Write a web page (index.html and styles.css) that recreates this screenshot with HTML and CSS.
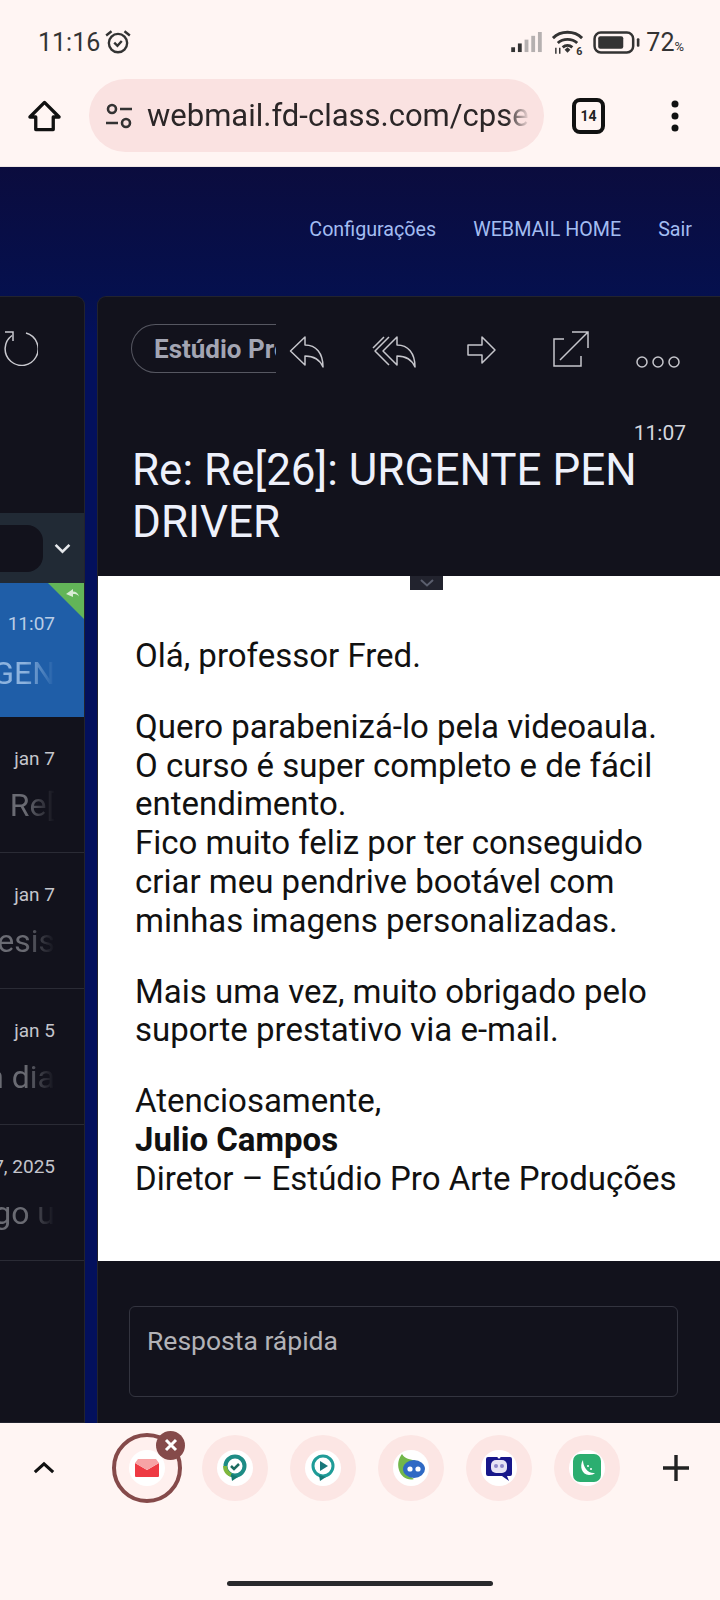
FILE: index.html
```html
<!DOCTYPE html>
<html lang="pt-BR">
<head>
  <meta charset="UTF-8" />
  <title>Webmail</title>
  <meta name="viewport" content="width=device-width, initial-scale=1" />
  <link rel="stylesheet" href="styles.css">
</head>
<body>
  <div class="screen">
    <header class="browser">
      <div class="status">
        <div class="status-left">
          <span class="clock">11:16</span>
          <svg class="alarm" viewBox="0 0 26 26" fill="none" stroke="#333" stroke-width="2.2"><circle cx="13" cy="14" r="8.5"/><path d="M2 7l5-4M24 7l-5-4M9.5 13.5l3 3 4-4.500"/></svg>
        </div>
        <div class="status-right">
          <svg class="signal" viewBox="0 0 32 22"><rect x="0" y="16" width="4" height="5" fill="#333"/><rect x="7" y="12" width="4" height="9" fill="#333"/><rect x="14" y="8" width="4" height="13" fill="#b5b0b0"/><rect x="21" y="4" width="4" height="17" fill="#b5b0b0"/><rect x="28" y="0" width="4" height="21" fill="#b5b0b0"/></svg>
          <svg class="wifi" viewBox="0 0 34 26" fill="none" stroke="#333" stroke-width="3"><path d="M2 9c8-8 22-8 30 0M7 14c5.500-5 14.500-5 20 0M12 18.500c3-2.500 7-2.500 10 0"/><path d="M14 21l3-2.500 3 2.500-3 3z" fill="#333" stroke="none"/><path d="M5 19v6M9 19v6" stroke-width="1.500"/><text x="26" y="26" class="wifi-six">6</text></svg>
          <svg class="battery" viewBox="0 0 46 22" fill="none"><rect x="1.500" y="1.500" width="37" height="19" rx="6" stroke="#333" stroke-width="2.400"/><rect x="5" y="5" width="24" height="12" rx="2" fill="#333"/><rect x="42" y="7" width="2.500" height="8" rx="1" fill="#333"/></svg>
          <span class="level">72<small>%</small></span>
        </div>
      </div>
      <div class="toolbar">
        <svg class="home" viewBox="0 0 36 36" fill="none" stroke="#111" stroke-width="3.400" stroke-linejoin="round"><path d="M18 4L3 19h6v13h18V19h6z"/></svg>
        <div class="url">
          <svg class="tune" viewBox="0 0 28 26" fill="none" stroke="#333" stroke-width="2.600"><circle cx="7" cy="6" r="4"/><path d="M15 6h12M1 20h12"/><circle cx="21" cy="20" r="4"/></svg>
          <span class="url-text">webmail.fd-class.com/cpsess</span>
        </div>
        <span class="tabs">14</span>
        <svg class="more" viewBox="0 0 8 32" fill="#111"><circle cx="4" cy="4" r="3.500"/><circle cx="4" cy="16" r="3.500"/><circle cx="4" cy="28" r="3.500"/></svg>
      </div>
    </header>

    <div class="page">
      <nav class="topnav">
        <a href="#">Configurações</a>
        <a href="#">WEBMAIL HOME</a>
        <a href="#">Sair</a>
      </nav>
      <div class="panels">
        <aside class="list">
          <div class="list-head">
            <svg class="refresh" viewBox="0 0 36 36" fill="none" stroke="#c9c9cf" stroke-width="1.500"><path d="M10 5.500A16.500 16.500 0 1 0 24 3"/><path d="M3 2h8v9"/></svg>
          </div>
          <div class="filter">
            <span class="filter-box"></span>
            <svg class="chev" viewBox="0 0 16 10" fill="none" stroke="#e6e8ec" stroke-width="2.400"><path d="M1.500 1.500L8 8l6.500-6.500"/></svg>
          </div>
          <div class="row row-active">
            <svg class="flag" viewBox="0 0 36 36"><path d="M0 0h36v36z" fill="#62b558"/><path d="M18 11l7-5v2.500c3 0 5 1.500 6 5-1.500-2-3-2.500-6-2.500v3z" fill="#d9ecd5"/></svg>
            <span class="date">11:07</span>
            <span class="subj">URGEN</span>
          </div>
          <div class="row">
            <span class="date">jan 7</span>
            <span class="subj">Re: Re[</span>
          </div>
          <div class="row">
            <span class="date">jan 7</span>
            <span class="subj">Apresis</span>
          </div>
          <div class="row">
            <span class="date">jan 5</span>
            <span class="subj">Bom dia</span>
          </div>
          <div class="row">
            <span class="date">dez 17, 2025</span>
            <span class="subj">Amigo u</span>
          </div>
        </aside>

        <main class="reader">
          <section class="mail-head">
            <div class="actions">
              <div class="chip"><span>Estúdio Pro Arte</span></div>
              <span class="act act-low"><svg width="36" height="36" viewBox="0 0 36 36" fill="none" stroke="#c6c6cc" stroke-width="1.500" stroke-linejoin="round"><path d="M1.500 17L16 3v8c11 0 18 8 18 22-3-7-9-11-18-11v9z"/></svg></span>
              <span class="act act-low"><svg width="44" height="36" viewBox="0 0 44 36" fill="none" stroke="#c6c6cc" stroke-width="1.500" stroke-linejoin="round"><path d="M11 17L25 3v8c11 0 18 8 18 22-3-7-9-11-18-11v9z"/><path d="M17 3L3 17l14 14M12 3L1 14"/></svg></span>
              <span class="act act-wide"><svg width="30" height="30" viewBox="0 0 30 30" fill="none" stroke="#c6c6cc" stroke-width="1.500" stroke-linejoin="round"><path d="M1 10h14V2l13 13-13 13v-8H1z"/></svg></span>
              <span class="act"><svg width="38" height="38" viewBox="0 0 38 38" fill="none" stroke="#c6c6cc" stroke-width="1.500"><path d="M12 9H2v27h27V26M8 30L36 2M20 2h16v16"/></svg></span>
              <span class="act act-dots"><svg width="46" height="14" viewBox="0 0 46 14" fill="none" stroke="#c6c6cc" stroke-width="1.500"><circle cx="7" cy="7" r="5"/><circle cx="23" cy="7" r="5"/><circle cx="39" cy="7" r="5"/></svg></span>
            </div>
            <div class="time">11:07</div>
            <h1 class="subject">Re: Re[26]: URGENTE PEN DRIVER</h1>
            <span class="tab"><svg width="14" height="8" viewBox="0 0 14 8" fill="none" stroke="#5b5f6e" stroke-width="2"><path d="M1 1l6 5.500L13 1"/></svg></span>
          </section>
          <article class="mail-body">
            <p>Olá, professor Fred.</p>
            <p>Quero parabenizá-lo pela videoaula.<br>O curso é super completo e de fácil entendimento.<br>Fico muito feliz por ter conseguido criar meu pendrive bootável com minhas imagens personalizadas.</p>
            <p>Mais uma vez, muito obrigado pelo suporte prestativo via e-mail.</p>
            <p>Atenciosamente,<br><strong>Julio Campos</strong><br>Diretor – Estúdio Pro Arte Produções</p>
          </article>
          <section class="quick">
            <div class="quick-box">Resposta rápida</div>
          </section>
        </main>
      </div>
    </div>

    <footer class="shelf">
      <div class="dock">
        <svg class="dock-up" viewBox="0 0 24 14" fill="none" stroke="#111" stroke-width="3.400"><path d="M2 12L12 3l10 9"/></svg>
        <span class="bubble bubble-on">
          <span class="disc">
            <svg width="26" height="20" viewBox="0 0 26 20"><path d="M1 5l12 7 12-7v13a1 1 0 0 1-1 1H2a1 1 0 0 1-1-1z" fill="#ee3a43"/><path d="M1 5l3-4h18l3 4-12 7z" fill="#f7a3a5"/></svg>
          </span>
          <span class="close"><svg width="14" height="14" viewBox="0 0 14 14" stroke="#fff" stroke-width="3"><path d="M2 2l10 10M12 2L2 12"/></svg></span>
        </span>
        <span class="bubble"><span class="disc">
          <svg width="24" height="28" viewBox="0 0 24 28" fill="none"><circle cx="12" cy="12" r="9.500" stroke="#1d8c85" stroke-width="4"/><path d="M2 12a10 10 0 0 0 6 9" stroke="#7fb73c" stroke-width="4"/><path d="M8 20l1 7 6-4z" fill="#157a6f"/><path d="M8 12l3 3 5-5" stroke="#1c6b5f" stroke-width="2.500"/></svg>
        </span></span>
        <span class="bubble"><span class="disc">
          <svg width="24" height="28" viewBox="0 0 24 28" fill="none"><circle cx="12" cy="12" r="10" stroke="#1f9c98" stroke-width="3"/><path d="M8 21l1 6 6-4z" fill="#157a78"/><path d="M9 7l8 5-8 5z" fill="#17777a"/></svg>
        </span></span>
        <span class="bubble"><span class="disc">
          <svg width="28" height="30" viewBox="0 0 28 30"><path d="M5 1c-3 4-5 9-3 16 2 7 9 11 15 9-6-3-7-12 2-18C13 6 8 6 5 1z" fill="#72b74a"/><ellipse cx="17" cy="16" rx="11" ry="9" fill="#2f69c4"/><circle cx="13" cy="16" r="2.600" fill="#fff"/><circle cx="21" cy="16" r="2.600" fill="#fff"/></svg>
        </span></span>
        <span class="bubble"><span class="disc">
          <svg width="28" height="28" viewBox="0 0 28 28"><path d="M3 3h22a2 2 0 0 1 2 2v15a2 2 0 0 1-2 2h-3l2 5-7-5H3a2 2 0 0 1-2-2V5a2 2 0 0 1 2-2z" fill="#16168a"/><rect x="6" y="6" width="16" height="13" rx="5" fill="#e6e3f5"/><circle cx="11" cy="12" r="2" fill="#8d87c9"/><circle cx="17" cy="12" r="2" fill="#8d87c9"/><circle cx="14" cy="3" r="1.500" fill="#fff"/></svg>
        </span></span>
        <span class="bubble"><span class="disc">
          <svg width="28" height="28" viewBox="0 0 28 28" fill="none"><rect width="28" height="28" rx="7" fill="#2bae70"/><path d="M10 6c-4 6-1 15 6 15 3 0 5-1 6-2-7 1-12-6-12-13z" fill="#fff"/><circle cx="15" cy="12" r="1" fill="#fff"/><circle cx="18" cy="15" r="1" fill="#fff"/></svg>
        </span></span>
        <svg class="dock-add" viewBox="0 0 26 26" stroke="#222" stroke-width="3.400"><path d="M13 0v26M0 13h26"/></svg>
      </div>
      <div class="gesture"></div>
    </footer>
  </div>
</body>
</html>
```
FILE: styles.css
```css
/* Reset and base */
*, *::before, *::after {
  box-sizing: border-box;
}

body {
  font-family: Roboto, 'Liberation Sans', sans-serif;
  margin: 0;
  background-color: #fff5f3;
  color: #2b2b2f;
}

.screen {
  width: 720px;
  height: 1600px;
  overflow: hidden;
  display: flex;
  flex-direction: column;
}

/* Phone and browser chrome */
.browser {
  height: 167px;
  flex-shrink: 0;
  background-color: #fff5f3;
  border-bottom: 1px solid #eee6e4;
}

.status {
  height: 79px;
  padding: 27px 36px 0 38px;
  display: flex;
  justify-content: space-between;
  align-items: flex-start;
}

.status-left,
.status-right {
  display: flex;
  align-items: center;
  height: 30px;
}

.clock {
  font-size: 25px;
  color: #333;
}

.alarm {
  width: 28px;
  height: 28px;
  margin-left: 4px;
}

.signal {
  width: 33px;
  height: 21px;
  margin-right: 8px;
}

.wifi {
  width: 33px;
  height: 26px;
  margin-right: 9px;
}

.wifi-six {
  font-size: 11px;
  font-weight: 700;
  fill: #333;
  stroke: none;
}

.battery {
  width: 48px;
  height: 23px;
  margin-right: 5px;
}

.level {
  font-size: 25px;
  color: #333;
}

.level small {
  font-size: 13px;
}

.toolbar {
  height: 73px;
  display: flex;
  align-items: center;
  padding-left: 27px;
}

.home {
  width: 35px;
  height: 36px;
  flex-shrink: 0;
}

.url {
  width: 455px;
  height: 73px;
  margin-left: 27px;
  padding: 0 14px 0 16px;
  background-color: #fae2e1;
  border-radius: 37px;
  display: flex;
  align-items: center;
  overflow: hidden;
}

.tune {
  width: 28px;
  height: 26px;
  flex-shrink: 0;
}

.url-text {
  margin-left: 14px;
  font-size: 31px;
  color: #2b2627;
  white-space: nowrap;
  overflow: hidden;
  -webkit-mask-image: linear-gradient(to right, #000 94%, transparent 100%);
  mask-image: linear-gradient(to right, #000 94%, transparent 100%);
}

.tabs {
  width: 33px;
  height: 36px;
  margin-left: 28px;
  border: 4px solid #111;
  border-radius: 8px;
  font-size: 14px;
  font-weight: 700;
  color: #222;
  display: flex;
  align-items: center;
  justify-content: center;
  flex-shrink: 0;
}

.more {
  width: 8px;
  height: 32px;
  margin-left: 66px;
  flex-shrink: 0;
}

/* Webmail page */
.page {
  flex-grow: 1;
  min-height: 0;
  overflow: hidden;
  background: linear-gradient(#0b0c3e, #05104e 129px, #03105c 170px);
}

.topnav {
  height: 129px;
  padding: 0 28px 4px;
  display: flex;
  justify-content: flex-end;
  align-items: center;
  gap: 37px;
}

.topnav a {
  font-size: 19.700px;
  color: #a3bdf2;
  text-decoration: none;
}

.panels {
  display: flex;
  gap: 12px;
  height: 1127px;
}

/* Message list, cut off by the left edge */
.list {
  width: 85px;
  flex-shrink: 0;
  background-color: #12121c;
  border: 1px solid #22232e;
  border-left: none;
  border-radius: 0 9px 0 0;
}

.list-head {
  height: 216px;
  padding-top: 33px;
}

.refresh {
  width: 36px;
  height: 36px;
  margin-left: 2px;
  display: block;
}

.filter {
  height: 70px;
  background-color: #212a35;
  display: flex;
  align-items: center;
  position: relative;
}

.filter-box {
  width: 43px;
  height: 47px;
  background-color: #12121c;
  border-radius: 0 16px 16px 0;
}

.chev {
  width: 17px;
  height: 11px;
  margin-left: 11px;
}

.row {
  height: 136px;
  padding: 31px 29px 0 0;
  border-bottom: 1px solid #2a2b35;
  display: flex;
  flex-direction: column;
  align-items: flex-end;
  position: relative;
  overflow: hidden;
}

.row-active {
  height: 134px;
  background-color: #1f5ea8;
  border-bottom-color: #1f5ea8;
  padding-top: 30px;
}

.flag {
  position: absolute;
  top: 0;
  right: 0;
  width: 36px;
  height: 36px;
}

.date {
  font-size: 19px;
  line-height: 22px;
  color: #c4c5cc;
  white-space: nowrap;
}

.row-active .date {
  color: #b9cde6;
}

.subj {
  width: 55px;
  margin-top: 15px;
  font-size: 32px;
  line-height: 40px;
  color: #6a6b73;
  white-space: nowrap;
  display: flex;
  justify-content: flex-end;
  overflow: hidden;
  -webkit-mask-image: linear-gradient(to right, #000 45%, transparent 100%);
  mask-image: linear-gradient(to right, #000 45%, transparent 100%);
}

.row-active .subj {
  margin-top: 18px;
  color: #8db3de;
}

/* Reader */
.reader {
  flex-grow: 1;
  min-width: 0;
  background-color: #12121c;
  border-top: 1px solid #22232e;
  border-left: 1px solid #22232e;
  border-radius: 9px 0 0 0;
}

.mail-head {
  height: 279px;
  padding: 27px 34px 0 34px;
  position: relative;
}

.actions {
  display: flex;
  align-items: center;
  height: 49px;
  margin-right: -34px;
}

.chip {
  width: 145px;
  height: 49px;
  margin-left: -1px;
  margin-right: -13px;
  padding-left: 22px;
  border: 1px solid #565761;
  border-right: none;
  border-radius: 25px 0 0 25px;
  overflow: hidden;
  white-space: nowrap;
  flex-shrink: 0;
  display: flex;
  align-items: center;
  font-size: 26px;
  font-weight: 700;
  color: #a3a5b3;
}

.act {
  width: 87px;
  flex-shrink: 0;
  display: flex;
  justify-content: center;
  position: relative;
}

.act-low {
  padding-top: 6px;
}

.act-wide {
  width: 90px;
  padding-top: 2px;
}

.act-dots {
  padding-top: 26px;
}

.time {
  margin-top: 49px;
  font-size: 21px;
  line-height: 22px;
  text-align: right;
  color: #d5d7de;
}

.subject {
  margin: 0;
  font-size: 44px;
  font-weight: 400;
  line-height: 52px;
  color: #eef1fb;
}

.tab {
  position: absolute;
  left: 312px;
  bottom: -14px;
  width: 33px;
  height: 14px;
  background-color: #22232e;
  display: flex;
  align-items: center;
  justify-content: center;
  z-index: 1;
}

.mail-body {
  height: 685px;
  padding: 61px 20px 0 37px;
  background-color: #ffffff;
  color: #111;
  font-size: 33px;
  line-height: 38.800px;
}

.mail-body p {
  margin: 0 0 32px;
}

.mail-body strong {
  font-weight: 700;
}

.quick {
  padding: 45px 42px 0 31px;
}

.quick-box {
  height: 91px;
  padding: 18px 17px;
  border: 1px solid #33343f;
  border-radius: 6px;
  font-size: 26.500px;
  line-height: 32px;
  color: #b2b2b7;
}

/* Bottom shelf */
.shelf {
  height: 177px;
  flex-shrink: 0;
  background-color: #fff5f3;
}

.dock {
  height: 88px;
  padding: 1px 0 0 33px;
  display: flex;
  align-items: center;
}

.dock-up {
  width: 22px;
  height: 13px;
  margin-right: 57px;
  flex-shrink: 0;
}

.bubble {
  width: 66px;
  height: 66px;
  margin-right: 22px;
  flex-shrink: 0;
  border-radius: 50%;
  background-color: #fce6e4;
  display: flex;
  align-items: center;
  justify-content: center;
  position: relative;
}

.bubble-on {
  width: 70px;
  height: 70px;
  margin-right: 20px;
  background-color: #fff0ee;
  border: 4px solid #854a4a;
}

.disc {
  width: 36px;
  height: 36px;
  background-color: #fff;
  border-radius: 50%;
  display: flex;
  align-items: center;
  justify-content: center;
}

.close {
  position: absolute;
  top: -6px;
  right: -7px;
  width: 29px;
  height: 29px;
  background-color: #854a4a;
  border-radius: 50%;
  display: flex;
  align-items: center;
  justify-content: center;
}

.dock-add {
  width: 26px;
  height: 26px;
  margin-left: 21px;
  flex-shrink: 0;
}

.gesture {
  width: 266px;
  height: 5px;
  margin: 70px 0 0 227px;
  background-color: #2a2a2c;
  border-radius: 3px;
}
```
